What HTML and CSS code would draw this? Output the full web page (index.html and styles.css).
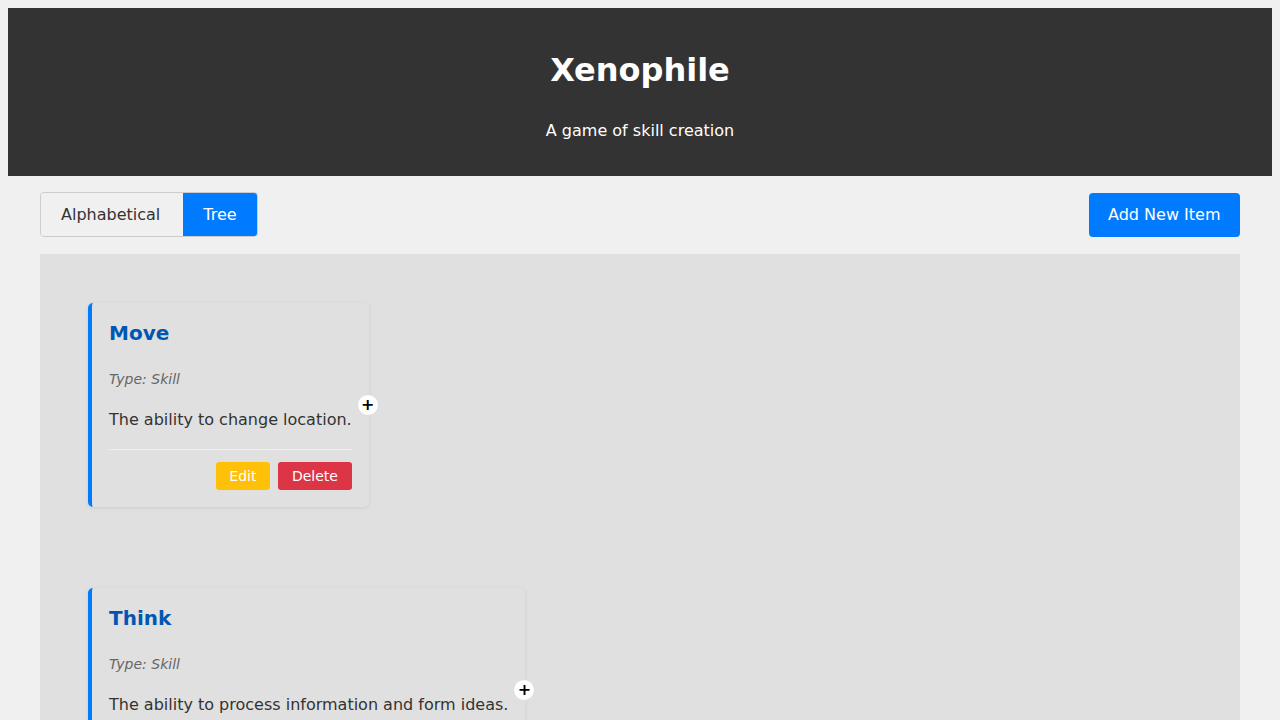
FILE: index.html
```html
<!DOCTYPE html>
<html lang="en">
<head>
<meta charset="utf-8">
<title>Xenophile</title>
<link rel="stylesheet" href="styles.css">
</head>
<body>
<header class="site-header">
  <h1 class="site-title">Xenophile</h1>
  <p class="site-subtitle">A game of skill creation</p>
</header>
<main class="container">
  <div class="controls">
    <div class="view-toggle">
      <button class="toggle-btn">Alphabetical</button>
      <button class="toggle-btn active">Tree</button>
    </div>
    <button class="add-btn">Add New Item</button>
  </div>
  <section class="tree">
    <div class="node">
      <h3 class="node-title">Move</h3>
      <p class="node-type">Type: Skill</p>
      <p class="node-desc">The ability to change location.</p>
      <div class="node-actions">
        <button class="btn btn-edit">Edit</button>
        <button class="btn btn-delete">Delete</button>
      </div>
      <button class="expand-btn">+</button>
    </div>
    <div class="node">
      <h3 class="node-title">Think</h3>
      <p class="node-type">Type: Skill</p>
      <p class="node-desc">The ability to process information and form ideas.</p>
      <div class="node-actions">
        <button class="btn btn-edit">Edit</button>
        <button class="btn btn-delete">Delete</button>
      </div>
      <button class="expand-btn">+</button>
    </div>
  </section>
</main>
</body>
</html>
```
FILE: styles.css
```css
* { box-sizing: border-box; }
html, body { height: 100%; }
body {
  margin: 8px;
  background: #f0f0f0;
  font-family: "DejaVu Sans", sans-serif;
  color: #333;
}
.site-header {
  background: #333;
  color: #fff;
  text-align: center;
  padding: 43px 20px 36px;
}
.site-title {
  margin: 0 0 32px;
  font-size: 32px;
  font-weight: bold;
}
.site-subtitle {
  margin: 0;
  font-size: 16px;
}
.container {
  max-width: 1200px;
  margin: 0 auto;
}
.controls {
  display: flex;
  justify-content: space-between;
  align-items: center;
  margin: 16px 0 17px;
}
.view-toggle {
  display: flex;
  gap: 3px;
  background: #f0f0f0;
  border: 1px solid #ccc;
  border-radius: 4px;
  overflow: hidden;
}
.toggle-btn {
  font-family: inherit;
  font-size: 16px;
  padding: 12px 20px;
  border: none;
  background: #f0f0f0;
  color: #333;
}
.toggle-btn.active {
  background: #007bff;
  color: #fff;
}
.add-btn {
  font-family: inherit;
  font-size: 16px;
  padding: 12px 19.5px 13px;
  border: none;
  border-radius: 4px;
  background: #007bff;
  color: #fff;
}
.tree {
  background: #e0e0e0;
  min-height: 600px;
  padding: 49px 48px 40px;
  display: flex;
  flex-direction: column;
  align-items: flex-start;
  gap: 81px;
}
.node {
  position: relative;
  border-left: 4px solid #007bff;
  border-radius: 5px;
  padding: 18px 17px 17px;
  box-shadow: 0 1px 4px rgba(0, 0, 0, 0.09);
}
.node-title {
  margin: 0;
  font-size: 20px;
  font-weight: bold;
  color: #0056b3;
}
.node-type {
  margin: 26px 0 0;
  font-size: 14px;
  font-style: italic;
  color: #666;
}
.node-desc {
  margin: 23px 0 0;
  font-size: 16px;
  color: #333;
  white-space: nowrap;
}
.node-actions {
  display: flex;
  justify-content: flex-end;
  gap: 8px;
  margin-top: 20px;
  padding-top: 12px;
  border-top: 1px solid #eee;
}
.btn {
  font-family: inherit;
  font-size: 14px;
  padding: 6px 13.75px;
  border: none;
  border-radius: 3px;
  color: #fff;
}
.btn-edit { background: #ffc107; }
.btn-delete { background: #dc3545; }
.expand-btn {
  position: absolute;
  right: -10px;
  top: 50%;
  transform: translateY(-50%);
  width: 22px;
  height: 22px;
  padding: 0;
  border: 1px solid #ddd;
  border-radius: 50%;
  background: #fff;
  color: #000;
  font-family: inherit;
  font-size: 16px;
  font-weight: bold;
  line-height: 20px;
  text-align: center;
}
```
